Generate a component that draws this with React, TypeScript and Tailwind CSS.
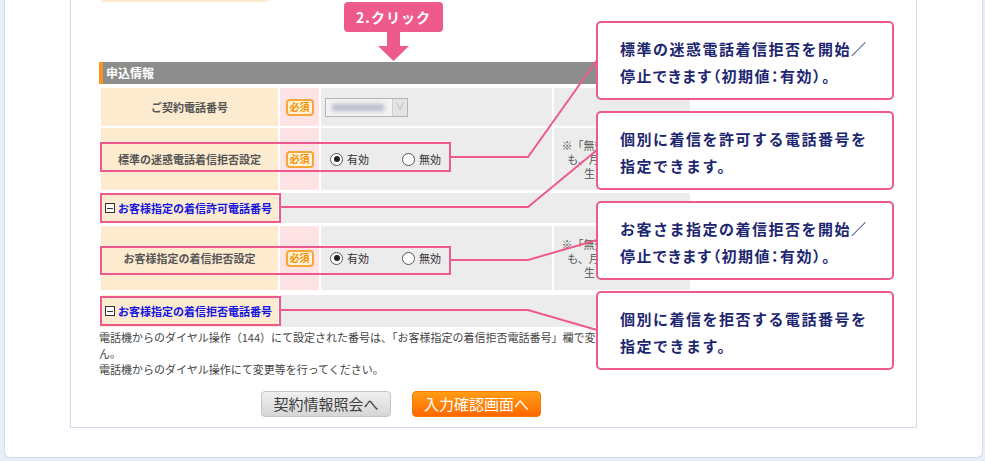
const pink = 'border-[#ee5a8e]'

function Radio({ checked }: { checked?: boolean }) {
  return (
    <span className="flex h-[13px] w-[13px] items-center justify-center rounded-full border border-[#555] bg-white">
      {checked && <span className="h-[6px] w-[6px] rounded-full bg-[#222]" />}
    </span>
  )
}

function Required() {
  return (
    <div className="flex w-[39px] items-center justify-center bg-[#fde3e3]">
      <span className="flex h-[17px] w-[28px] items-center justify-center rounded-[4px] border-2 border-[#f9a53a] bg-[#fff5dc] text-[10px] font-bold leading-none text-[#f39000]">
        必須
      </span>
    </div>
  )
}

function RadioGroup() {
  return (
    <div className="flex w-[231px] items-center bg-[#ececec] pl-[9px] text-[11px] text-[#333]">
      <div className="flex w-[72px] items-center gap-[4px]">
        <Radio checked />
        <span>有効</span>
      </div>
      <div className="flex items-center gap-[4px]">
        <Radio />
        <span>無効</span>
      </div>
    </div>
  )
}

function Note() {
  return (
    <div className="flex w-[136px] items-center justify-center bg-[#ececec]">
      <p className="text-center text-[11px] leading-[14px] text-[#555]">
        ※「無効」にした場合で
        <br />
        も、月額使用料金は発
        <br />
        生いたします。
      </p>
    </div>
  )
}

function LinkRow({ label, className }: { label: string; className: string }) {
  return (
    <div className={`flex gap-[2px] ${className}`}>
      <div className="flex w-[177px] items-center gap-[3px] bg-[#fdebcf] pl-[4px]">
        <span className="flex h-[10px] w-[10px] items-center justify-center border border-[#333] bg-white">
          <span className="h-px w-[6px] bg-[#333]" />
        </span>
        <span className="text-[11px] font-bold text-[#1414e0]">{label}</span>
      </div>
      <div className="w-[410px] bg-[#ececec]" />
    </div>
  )
}

function Callout({ top, lines }: { top: string; lines: string[] }) {
  return (
    <div
      className={`absolute left-[596px] flex h-[79px] w-[298px] flex-col justify-center rounded-[5px] border-2 ${pink} bg-white pl-[22px] pt-[3px] ${top}`}
    >
      {lines.map((l) => (
        <p
          key={l}
          className={`text-[15px] font-bold leading-[27px] tracking-[1.5px] text-[#1d2670] ${
            l.includes('（') ? "[font-feature-settings:'palt']" : ''
          }`}
        >
          {l}
        </p>
      ))}
    </div>
  )
}

export default function App() {
  return (
    <div className="relative h-[461px] w-[985px] overflow-hidden bg-[#e7eef8] font-['Noto_Sans_CJK_JP','Noto_Sans',sans-serif]">
      <div className="ml-[4px] h-[458px] w-[979px] rounded-b-[6px] border-x border-b border-[#d2deee] bg-white">
        <div className="ml-[65px] h-[428px] w-[847px] border-x border-b border-[#d2deee] pl-[28px]">
          <div className="ml-[2px] h-[2px] w-[167px] bg-[#fdebcf]" />

          {/* section header */}
          <div className="mt-[60px] flex h-[22px] w-[591px] items-center bg-[#8d8d8d]">
            <span className="h-full w-[4px] bg-[#f7941d]" />
            <span className="ml-[3px] text-[12px] font-bold text-white">申込情報</span>
          </div>

          <div className="mt-[4px] flex flex-col pl-[2px]">
            <div className="flex h-[38px] gap-[2px]">
              <div className="flex w-[177px] items-center justify-center bg-[#fdebcf] text-[11px] font-bold text-[#555]">
                ご契約電話番号
              </div>
              <Required />
              <div className="flex w-[231px] items-center bg-[#ececec] pl-[4px]">
                <div className="flex h-[19px] w-[83px] border border-[#b5b5b5] bg-[#f3f3f3]">
                  <div className="flex flex-1 items-center px-[6px]">
                    <div className="h-[7px] w-[52px] bg-[#b9bccb] blur-[2px]" />
                  </div>
                  <div className="flex w-[15px] items-center justify-center border-l border-[#cfcfcf] bg-[#e4e4e4] text-[9px] text-[#aaa]">
                    ∨
                  </div>
                </div>
              </div>
              <div className="w-[136px] bg-[#ececec]" />
            </div>

            <div className="mt-[2px] flex h-[62px] gap-[2px]">
              <div className="flex w-[177px] items-center justify-center bg-[#fdebcf] text-[11px] font-bold text-[#555]">
                標準の迷惑電話着信拒否設定
              </div>
              <Required />
              <RadioGroup />
              <Note />
            </div>

            <LinkRow label="お客様指定の着信許可電話番号" className="mt-[3px] h-[30px]" />

            <div className="mt-[3px] flex h-[64px] gap-[2px]">
              <div className="flex w-[177px] items-center justify-center bg-[#fdebcf] text-[11px] font-bold text-[#555]">
                お客様指定の着信拒否設定
              </div>
              <Required />
              <RadioGroup />
              <Note />
            </div>

            <LinkRow label="お客様指定の着信拒否電話番号" className="mt-[5px] h-[32px]" />
          </div>

          <div className="mt-[2px] whitespace-nowrap text-[11px] leading-[16px] text-[#444]">
            <p>電話機からのダイヤル操作（144）にて設定された番号は、「お客様指定の着信拒否電話番号」欄で変更等できませ</p>
            <p>ん。</p>
            <p>電話機からのダイヤル操作にて変更等を行ってください。</p>
          </div>

          <div className="mt-[14px] flex gap-[21px] pl-[162px]">
            <button className="flex h-[26px] w-[130px] items-center justify-center rounded-[4px] border border-[#c4c4c4] bg-gradient-to-b from-[#f0f0f0] to-[#d6d6d6] text-[15px] text-[#3c3c3c]">
              契約情報照会へ
            </button>
            <button className="flex h-[26px] w-[129px] items-center justify-center rounded-[4px] border border-[#f47a00] bg-gradient-to-b from-[#ff9d14] to-[#ff6600] text-[15px] text-white">
              入力確認画面へ
            </button>
          </div>
        </div>
      </div>

      {/* annotations */}
      <div className="absolute left-[344px] top-[2px] flex h-[30px] w-[99px] items-center justify-center rounded-[4px] bg-[#ef5a8c] text-[14px] font-bold tracking-[1px] text-white">
        2.クリック
      </div>
      <svg className="pointer-events-none absolute inset-0" width="985" height="461">
        <rect x="387" y="31" width="13" height="16" fill="#ef5a8c" />
        <polygon points="378,46 409,46 393.5,61" fill="#ef5a8c" />
        <g fill="none" stroke="#ee5a8e" strokeWidth="2">
          <polyline points="450,157 528,157 597,60" />
          <polyline points="280,207 528,207 597,150" />
          <polyline points="450,260 528,260 597,240" />
          <polyline points="280,310 528,310 597,330" />
        </g>
      </svg>
      <div className={`absolute left-[100px] top-[142px] h-[30px] w-[351px] border-2 ${pink}`} />
      <div className={`absolute left-[100px] top-[193px] h-[30px] w-[181px] border-2 ${pink}`} />
      <div className={`absolute left-[100px] top-[246px] h-[29px] w-[351px] border-2 ${pink}`} />
      <div className={`absolute left-[100px] top-[296px] h-[30px] w-[181px] border-2 ${pink}`} />

      <Callout top="top-[21px]" lines={['標準の迷惑電話着信拒否を開始／', '停止できます（初期値：有効）。']} />
      <Callout top="top-[111px]" lines={['個別に着信を許可する電話番号を', '指定できます。']} />
      <Callout top="top-[201px]" lines={['お客さま指定の着信拒否を開始／', '停止できます（初期値：有効）。']} />
      <Callout top="top-[291px]" lines={['個別に着信を拒否する電話番号を', '指定できます。']} />
    </div>
  )
}
